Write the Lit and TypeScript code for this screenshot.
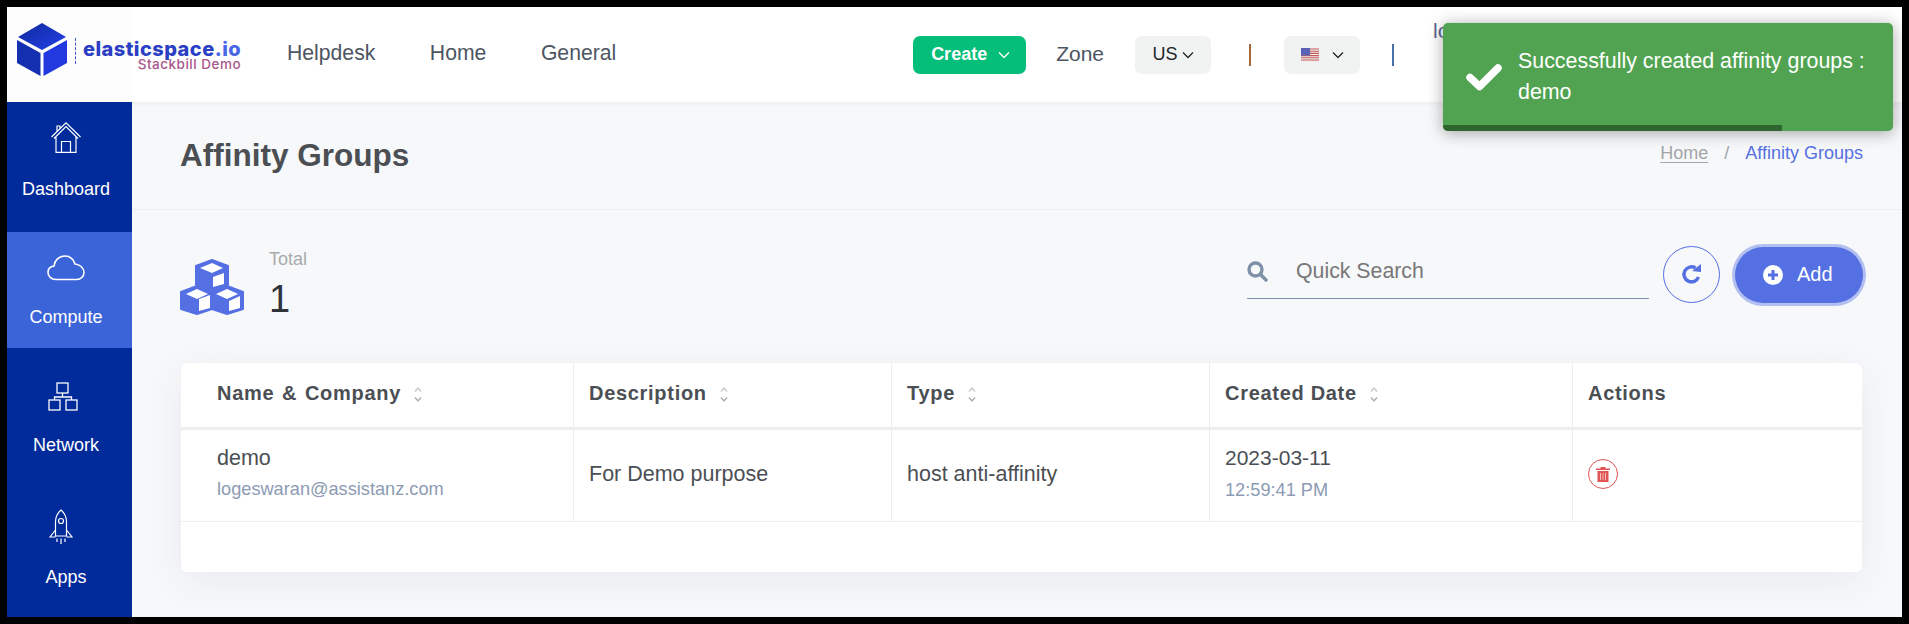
import { LitElement, html, css, svg } from "lit";
import { customElement } from "lit/decorators.js";

const chevron = svg`<path d="M1 1.5 6 6.5 11 1.5" fill="none" stroke="currentColor" stroke-width="1.3"/>`;
const sort = html`<svg class="sort" width="10" height="17" viewBox="0 0 10 17"><path d="M2 5.500 5 2 8 5.500" fill="none" stroke="#c4c7cb" stroke-width="1.400"/><path d="M2 11.500 5 15 8 11.500" fill="none" stroke="#a9adb3" stroke-width="1.400"/></svg>`;

@customElement("app-root")
export class AppRoot extends LitElement {
  static styles = css`
    :host { display: block; width: 1909px; height: 624px; box-sizing: border-box; padding: 7px; background: #000; font-family: "Liberation Sans", Arial, sans-serif; color: #495057; }
    .shell { position: relative; height: 610px; display: grid; grid-template-columns: 125px 1fr; grid-template-rows: 95px 1fr; overflow: hidden; background: #f7f8fa; }
    header { grid-column: 1 / 3; display: flex; align-items: center; background: #fff; height: 95px; position: relative; z-index: 1; box-shadow: 0 2px 6px rgba(60,60,120,.05); }
    .logo { width: 125px; height: 95px; flex: none; background: #fdfdfd; display: flex; align-items: flex-start; padding: 15px 0 0 9px; box-sizing: border-box; position: relative; }
    .cube { flex: none; }
    .dash { width: 0; height: 26px; border-left: 1.5px dashed #3a55d0; margin: 16px 0 0 7px; flex: none; }
    .brand { margin: 18px 0 0 7px; white-space: nowrap; display: flex; flex-direction: column; align-items: flex-end; line-height: 1; }
    .brand b { font: 800 20px/18px Inter, "Noto Sans", sans-serif; letter-spacing: .45px; color: #2a3fc4; }
    .brand b i { font-style: normal; color: #4a66e8; }
    .brand span { font: 500 13.5px/12px Inter, "Noto Sans", sans-serif; letter-spacing: .5px; color: #a9568c; }
    nav { display: flex; gap: 54.5px; font-size: 21.2px; color: #4d5562; margin-left: 155px; padding-bottom: 4px; }
    .right { margin-left: auto; display: flex; align-items: center; }
    .create { width: 113px; height: 38px; box-sizing: border-box; border-radius: 7px; background: #05be7a; color: #fff; font-weight: 700; font-size: 18px; display: flex; align-items: center; padding-left: 18px; gap: 11px; }
    .zone { font-size: 21px; color: #4d5562; margin-left: 30px; padding-bottom: 2px; }
    .pill { width: 76px; height: 38px; background: #f1f3f3; border-radius: 7px; display: flex; align-items: center; justify-content: center; color: #212529; font-size: 18px; }
    .pill.us { margin-left: 31px; gap: 4px; }
    .pill.fl { gap: 13px; }
    .sep { width: 2px; height: 22px; flex: none; }
    .sep.a { background: #a5683a; margin: 0 33px 0 38px; }
    .sep.b { background: #4a70a8; margin: 0 0 0 32px; }
    .user { width: 508px; box-sizing: border-box; padding: 0 0 0 39px; align-self: flex-start; margin-top: -17px; font-size: 21px; line-height: 24px; color: #5a6690; height: 24px; white-space: nowrap; }
    aside { background: #012a9b; color: #fff; padding-top: 2px; display: flex; flex-direction: column; gap: 12px; font-size: 18px; }
    .item { height: 116px; display: flex; flex-direction: column; align-items: center; position: relative; padding: 12px 7px 0 0; box-sizing: border-box; }
    .item.on { background: #3a64d8; }
    .ic { height: 48px; display: flex; align-items: center; justify-content: center; }
    .lbl { margin-top: 14px; line-height: 22px; }
    .item.home .ic { margin-top: -3px; margin-bottom: 3px; }
    .item.net .ic { margin-right: 6px; }
    .item.apps .ic { margin: 3px 10px 0 0; }
    .item.apps .lbl { margin-top: 15px; }
    main { padding: 0; min-width: 0; position: relative; }
    .head { height: 108px; box-sizing: border-box; border-bottom: 1px solid #eceef0; display: flex; align-items: center; justify-content: space-between; padding: 0 39px 0 48px; }
    h1 { margin: 0; font-size: 31.5px; font-weight: 700; color: #4b4f54; }
    .crumb { font-size: 18px; color: #a3a5a8; display: flex; gap: 16px; margin-top: -4px; }
    .crumb u { text-underline-offset: 3px; }
    .crumb em { font-style: normal; color: #5570e3; }
    .tools { display: flex; align-items: center; padding: 34px 39px 0 48px; height: 61px; }
    .stat { display: flex; align-items: flex-start; gap: 25px; margin-top: 20px; }
    .stat svg { margin-top: 10px; }
    .stat small { display: block; font-size: 18px; color: #aaa; line-height: 20px; }
    .stat strong { display: block; font-weight: 400; font-size: 38px; line-height: 44px; color: #30343a; margin-top: 8px; }
    .search { margin-left: auto; width: 402px; height: 54px; border-bottom: 1px solid #7d93ad; display: flex; align-items: center; box-sizing: content-box; margin-top: -6px; }
    .search span { margin-left: 28px; font-size: 21.3px; color: #777; }
    .refresh { width: 57px; height: 57px; box-sizing: border-box; border-radius: 50%; border: 1px solid #5570e3; margin: -1px 0 0 14px; display: flex; align-items: center; justify-content: center; }
    .add { width: 128px; height: 56px; border-radius: 28px; background: #5570e3; box-shadow: 0 0 0 3px #b3bff1; margin: 0 0 0 15px; color: #fff; font-size: 20px; display: flex; align-items: center; padding-left: 28px; box-sizing: border-box; gap: 14px; }
    .card { margin: 58px 40px 0 49px; height: 209px; background: #fff; border-radius: 6px; box-shadow: 0 10px 40px rgba(60,60,90,.07); overflow: hidden; }
    table { border-collapse: collapse; width: 100%; table-layout: fixed; }
    th { box-sizing: border-box; text-align: left; font-size: 20px; letter-spacing: .7px; font-weight: 700; color: #4b4f54; border-bottom: 3px solid #eee; border-right: 1px solid #eee; padding: 0 0 2px 15.5px; height: 65px; }
    td { height: 93px; box-sizing: border-box; border-bottom: 1px solid #eee; border-right: 1px solid #eee; padding: 0 0 2px 15.5px; font-size: 21.5px; color: #4b4f54; vertical-align: middle; }
    th:last-child, td:last-child { border-right: 0; }
    th:first-child, td:first-child { padding-left: 36px; }
    th:first-child { word-spacing: 1.5px; }
    .sort { margin-left: 12px; vertical-align: -3px; }
    .t1 { font-size: 21.5px; line-height: 26px; }
    .t2 { font-size: 18.2px; line-height: 24px; color: #8c9bb3; margin: 6px 0 2px; }
    .d1 { font-size: 21px; line-height: 26px; }
    .d2 { font-size: 18.2px; line-height: 24px; color: #8c9bb3; margin: 7px 0 2px; }
    .del { width: 30px; height: 30px; box-sizing: border-box; border-radius: 50%; border: 1px solid #e05555; display: flex; align-items: center; justify-content: center; }
    .toast { position: absolute; left: 1436px; top: 16px; width: 450px; height: 108px; box-sizing: border-box; background: #51a351; border-radius: 5px; box-shadow: 0 2px 16px rgba(0,0,0,.35); color: #fff; font-size: 21.4px; line-height: 31px; display: flex; align-items: center; padding: 0 18px 0 23px; gap: 16px; z-index: 5; overflow: hidden; }
    .bar { position: absolute; left: 0; bottom: 0; height: 6px; background: #2f662f; }
  `;

  render() {
    return html`<div class="shell">
      <header>
        <div class="logo">
          <svg class="cube" width="52" height="55" viewBox="0 0 52 55">
            <defs><linearGradient id="g" x1="0" y1="0" x2="1" y2="1"><stop offset="0" stop-color="#0c2a9c"/><stop offset="1" stop-color="#2540ea"/></linearGradient></defs>
            <path d="M26 1 50 15 26 28 2 15Z" fill="url(#g)"/>
            <path d="M1 18 24.500 31V54L1 41Z" fill="#1430b0"/>
            <path d="M51 18 27.500 31V54L51 41Z" fill="#2239e0"/>
          </svg>
          <div class="dash"></div>
          <div class="brand"><b>elasticspace<i>.io</i></b><span>Stackbill Demo</span></div>
        </div>
        <nav><span>Helpdesk</span><span>Home</span><span>General</span></nav>
        <div class="right">
          <div class="create">Create <svg width="12" height="8" viewBox="0 0 12 8">${chevron}</svg></div>
          <span class="zone">Zone</span>
          <div class="pill us">US <svg width="12" height="8" viewBox="0 0 12 8">${chevron}</svg></div>
          <div class="sep a"></div>
          <div class="pill fl">
            <svg width="18" height="14" viewBox="0 0 18 14"><rect width="18" height="14" fill="#eee"/><path d="M0 1h18M0 3.200h18M0 5.400h18M0 7.600h18M0 9.800h18M0 12h18" stroke="#c65a5a" stroke-width="1.100"/><rect width="9" height="7.500" fill="#5a62b8"/></svg>
            <svg width="12" height="8" viewBox="0 0 12 8">${chevron}</svg>
          </div>
          <div class="sep b"></div>
          <div class="user">logeswaran@assistanz.com</div>
        </div>
      </header>
      <aside>
        <div class="item home">
          <div class="ic"><svg width="30" height="31" viewBox="0 0 30 31" fill="none" stroke="#fff" stroke-width="1.200"><path d="M.5 15 15 .8 29.500 15M3 16.500 15 4.500 27 16.500M6 9.500V4H9V6.500M5 14.500V30.400H25V14.500M10.500 30.400V19.500H19.500V30.400"/></svg></div>
          <div class="lbl">Dashboard</div>
        </div>
        <div class="item on">
          <div class="ic"><svg width="38" height="26" viewBox="0 0 38 26" fill="none" stroke="#fff" stroke-width="1.600"><path d="M9 24.500C4 24.500 1 21 1 17.500 1 14 3.500 11.500 7 11 7.500 5.500 12 1 18 1 23 1 27 4.500 28 9 33 9.500 37 13 37 17.500 37 21.500 33.500 24.500 30 24.500Z"/></svg></div>
          <div class="lbl">Compute</div>
        </div>
        <div class="item net">
          <div class="ic"><svg width="30" height="29" viewBox="0 0 30 29" fill="none" stroke="#fff" stroke-width="1.300"><rect x="9" y="1" width="11" height="10"/><rect x="1" y="18" width="11" height="10"/><rect x="18" y="18" width="11" height="10"/><path d="M14.500 11V15M6.500 18V15H23.500V18"/></svg></div>
          <div class="lbl">Network</div>
        </div>
        <div class="item apps">
          <div class="ic"><svg width="24" height="36" viewBox="0 0 24 36" fill="none" stroke="#fff" stroke-width="1.200"><path d="M12 1C8.500 4 6.500 8 6.500 13V27H17.500V13C17.500 8 15.500 4 12 1ZM6.500 21 1 28H6.500M17.500 21 23 28H17.500M12 29.500V35M8 29.500V33M16 29.500V33"/><circle cx="12" cy="12" r="2.500"/></svg></div>
          <div class="lbl">Apps</div>
        </div>
      </aside>
      <main>
        <div class="head"><h1>Affinity Groups</h1><div class="crumb"><u>Home</u><span>/</span><em>Affinity Groups</em></div></div>
        <div class="tools">
          <div class="stat">
            <svg width="64" height="57" viewBox="0 0 64 57"><g fill="#5570e3" stroke="#5570e3" stroke-width="2" stroke-linejoin="round"><path d="M32 1 48 7V26L32 33 16 26V7Z"/><path d="M17 27 32 33V50L17 55 1 50V33Z"/><path d="M47 27 63 33V50L47 55 32 50V33Z"/></g><g fill="#fff"><path d="M32 4 43 9 32 14 20 9ZM33 18 44 14V25L33 28ZM17 30 28 35 17 40 6 35ZM19 40 30 36V49L19 52ZM47 30 58 35 47 40 36 35ZM49 42 60 37V49L49 52Z"/></g></svg>
            <div><small>Total</small><strong>1</strong></div>
          </div>
          <div class="search">
            <svg width="21" height="21" viewBox="0 0 21 21" fill="none" stroke="#7d90a8" stroke-width="3.400"><circle cx="8.500" cy="8.500" r="6.500"/><path d="M13.500 13.500 19 19" stroke-linecap="round"/></svg>
            <span>Quick Search</span>
          </div>
          <div class="refresh"><svg width="21" height="22" viewBox="0 0 21 22" fill="none"><path d="M17.500 14A7.500 7.500 0 1 1 14.500 5" stroke="#5570e3" stroke-width="3.500"/><path d="M11 8 20 9V1Z" fill="#5570e3"/></svg></div>
          <div class="add"><svg width="20" height="20" viewBox="0 0 20 20"><circle cx="10" cy="10" r="10" fill="#fff"/><path d="M10 5V15M5 10H15" stroke="#5570e3" stroke-width="3"/></svg><span>Add</span></div>
        </div>
        <div class="card">
          <table>
            <colgroup><col style="width:392px"/><col style="width:318px"/><col style="width:318px"/><col style="width:363px"/><col/></colgroup>
            <tr><th>Name &amp; Company${sort}</th><th>Description${sort}</th><th>Type${sort}</th><th>Created Date${sort}</th><th>Actions</th></tr>
            <tr>
              <td><div class="t1">demo</div><div class="t2">logeswaran@assistanz.com</div></td>
              <td>For Demo purpose</td>
              <td>host anti-affinity</td>
              <td><div class="d1">2023-03-11</div><div class="d2">12:59:41 PM</div></td>
              <td><div class="del"><svg width="14" height="16" viewBox="0 0 14 16"><path d="M0 2.500H14V4H0ZM4.500 2.500V1H9.500V2.500Z" fill="#e05555"/><path d="M1.500 5H12.500V16H1.500Z" fill="#e05555"/><path d="M4.500 7V14M7 7V14M9.500 7V14" stroke="#f5bcbc" stroke-width="1"/></svg></div></td>
            </tr>
          </table>
        </div>
      </main>
      <div class="toast">
        <svg width="36" height="28" viewBox="0 0 36 28" style="flex:none"><path d="M4 14.500 13.500 23.500 32 5" fill="none" stroke="#fff" stroke-width="7.500" stroke-linejoin="round" stroke-linecap="round"/></svg>
        <div>Successfully created affinity groups : demo</div>
        <div class="bar" style="width:339px"></div>
      </div>
    </div>`;
  }
}
